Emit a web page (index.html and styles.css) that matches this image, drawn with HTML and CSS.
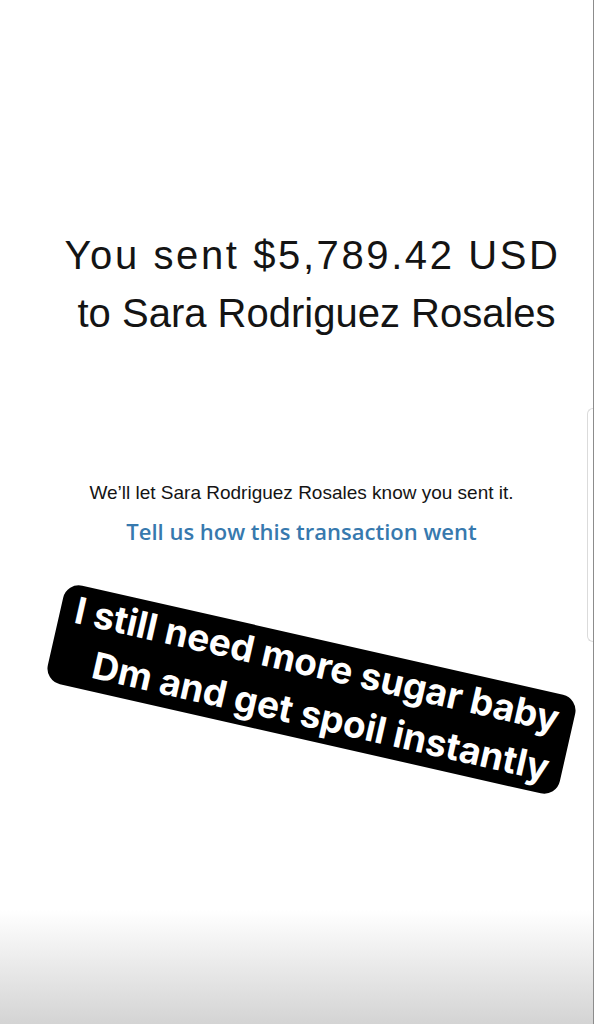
FILE: index.html
```html
<!doctype html>
<html>
<head>
    <meta charset="utf-8" />
    <title>Payment sent</title>
    <link rel="stylesheet" href="styles.css">
</head>

<body>
    <div id="screen">
        <div class="summary">
            <h1 class="amount">You sent $5,789.42 USD</h1>
            <h2 class="recipient">to Sara Rodriguez Rosales</h2>
        </div>
        <div class="notice">
            <p class="notice-text">We’ll let Sara Rodriguez Rosales know you sent it.</p>
            <a class="feedback" href="#">Tell us how this transaction went</a>
        </div>
        <div class="sticker">
            <span class="sticker-line">I still need more sugar baby</span>
            <span class="sticker-line second">Dm and get spoil instantly</span>
        </div>
        <div class="edge-tab"></div>
        <div class="fade"></div>
    </div>
</body>

</html>
```

FILE: styles.css
```css
:root {
    --ink: hsl(0deg 0% 8%);
    --link: hsl(207deg 52% 45%);
}
html, body {
    background-color: #fff;
}
body {
    margin: 0;
    color: var(--ink);
    font-family: 'Liberation Sans', Arial, sans-serif;
}

#screen {
    position: relative;
    height: 1024px;
    overflow: hidden;
    border-right: 1px solid hsl(0deg 0% 55%);
    box-sizing: border-box;

    display: flex;
    flex-direction: column;
    align-items: center;
}

.summary {
    margin-top: 226px;
    margin-left: 32px;
    text-align: center;
}
    .amount, .recipient {
        margin: 0;
        font-weight: normal;
        font-size: 40px;
        line-height: 58px;
    }
    .amount {
        letter-spacing: 2.6px;
    }
    .recipient {
        padding-left: 8px;
    }

.notice {
    margin-top: 140px;
    margin-left: 10px;
    display: flex;
    flex-direction: column;
    align-items: center;
    gap: 14px;
}
    .notice-text {
        margin: 0;
        font-size: 19px;
        line-height: 22px;
    }
    .feedback {
        font-family: 'Open Sans', sans-serif;
        font-weight: 600;
        font-size: 22px;
        line-height: 26px;
        color: var(--link);
        text-decoration: none;
    }

/* story sticker laid over the screenshot */
.sticker {
    position: absolute;
    left: 49px;
    top: 639px;
    width: 525px;
    height: 101px;
    transform: rotate(12.8deg);

    display: flex;
    flex-direction: column;
    align-items: center;

    background-color: #000;
    border-radius: 16px;
    color: #fff;
    font-family: 'Inter', sans-serif;
    font-weight: 700;
    font-size: 37px;
    line-height: 50px;
    white-space: nowrap;
}
    .sticker-line.second {
        padding-left: 30px;
    }

.edge-tab {
    position: absolute;
    right: 0;
    top: 408px;
    width: 5px;
    height: 232px;
    border: 1px solid hsl(0deg 0% 86%);
    border-right: none;
    border-radius: 6px 0 0 6px;
}

.fade {
    position: absolute;
    left: 0;
    right: 0;
    bottom: 0;
    height: 114px;
    background: linear-gradient(#fff, hsl(0deg 0% 83%));
}
```
